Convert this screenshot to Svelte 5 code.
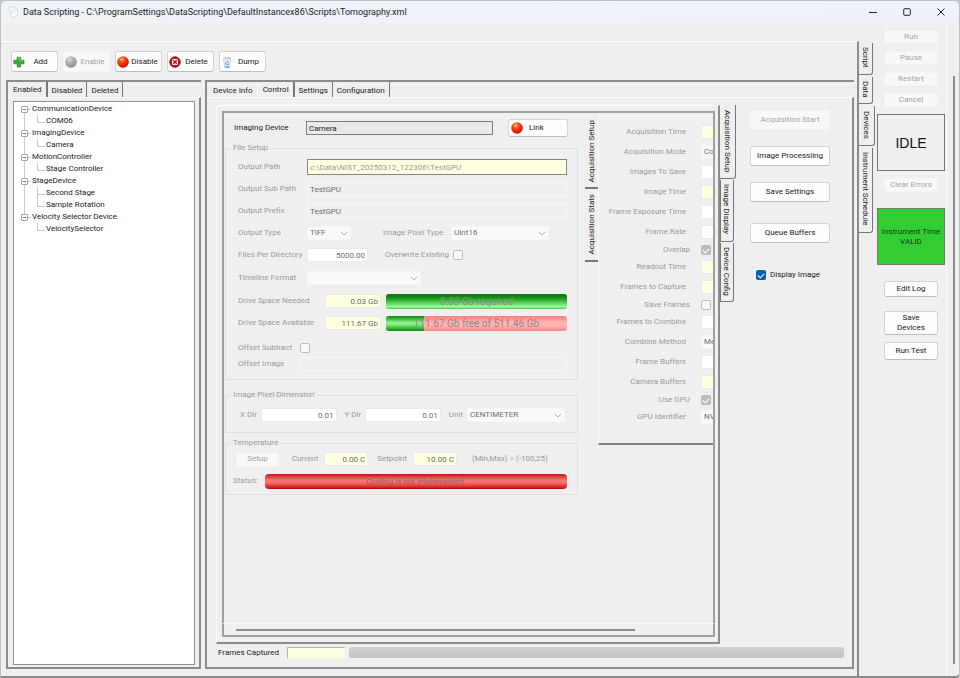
<script lang="ts">
  const tree = [
    { name: "CommunicationDevice", items: ["COM06"] },
    { name: "ImagingDevice", items: ["Camera"] },
    { name: "MotionController", items: ["Stage Controller"] },
    { name: "StageDevice", items: ["Second Stage", "Sample Rotation"] },
    { name: "Velocity Selector Device", items: ["VelocitySelector"] },
  ];

  const acquisition = [
    { label: "Acquisition Time", kind: "info" },
    { label: "Acquisition Mode", kind: "list", value: "Continuous" },
    { label: "Images To Save", kind: "text" },
    { label: "Image Time", kind: "info" },
    { label: "Frame Exposure Time", kind: "text" },
    { label: "Frame Rate", kind: "text" },
    { label: "Overlap", kind: "check", checked: true },
    { label: "Readout Time", kind: "info" },
    { label: "Frames to Capture", kind: "info" },
    { label: "Save Frames", kind: "check", checked: false },
    { label: "Frames to Combine", kind: "text" },
    { label: "Combine Method", kind: "list", value: "Mean" },
    { label: "Frame Buffers", kind: "text" },
    { label: "Camera Buffers", kind: "info" },
    { label: "Use GPU", kind: "check", checked: true },
    { label: "GPU Identifier", kind: "list", value: "NVIDIA" },
  ];

  const needed = { used: 100, text: "0.03 Gb required" };
  const available = { used: 21, text: "111.67 Gb free of 511.46 Gb" };

  let deviceTab = $state("Enabled");
  let pageTab = $state("Control");
  let sideTab = $state("Devices");
  let cameraTab = $state("Acquisition Setup");
  let setupTab = $state("Acquisition Setup");
  let displayImage = $state(true);
</script>

{#snippet ball(on)}
  <svg class="icon" viewBox="0 0 12 12" aria-hidden="true">
    <defs>
      <radialGradient id={on ? "ball-on" : "ball-off"} cx="40%" cy="28%" r="70%">
        <stop offset="0" stop-color={on ? "#ffc9a0" : "#dedede"} />
        <stop offset="0.35" stop-color={on ? "#ff4a18" : "#b8b8b8"} />
        <stop offset="1" stop-color={on ? "#c91000" : "#8e8e8e"} />
      </radialGradient>
    </defs>
    <circle cx="6" cy="6" r="5.8" fill="url(#{on ? 'ball-on' : 'ball-off'})" />
  </svg>
{/snippet}

{#snippet dropdown(id, value, cls)}
  <span class="dropdown {cls}">
    <select {id} disabled aria-label={id}>
      <option>{value}</option>
    </select>
    <svg viewBox="0 0 8 5" aria-hidden="true">
      <path d="M1 1l3 3 3-3" fill="none" stroke="#b4b4b4" />
    </svg>
  </span>
{/snippet}

{#snippet tabs(names, current, pick, cls)}
  <div class="tabs {cls}" role="tablist">
    {#each names as name}
      <button
        role="tab"
        class:selected={name === current}
        aria-selected={name === current}
        onclick={() => pick(name)}><span>{name}</span></button
      >
    {/each}
  </div>
{/snippet}

<div class="window">
  <header>
    <svg class="app-icon" viewBox="0 0 10 12" aria-hidden="true">
      <path d="M1 1.5l6-1 2.5 2.5v6.500l-6 2z" fill="#fbfbfb" stroke="#d2d2d2" stroke-width=".7" />
      <path d="M7 .5l.3 3 2.200-.500M3 5l4-.8M3.200 7l4-.8" fill="none" stroke="#d2d2d2" stroke-width=".7" />
    </svg>
    <h1>Data Scripting - C:\ProgramSettings\DataScripting\DefaultInstancex86\Scripts\Tomography.xml</h1>
    <div class="controls">
      <button aria-label="Minimize">
        <svg viewBox="0 0 8 8"><path d="M0 4.500h8" /></svg>
      </button>
      <button aria-label="Maximize">
        <svg viewBox="0 0 8 8"><rect x=".7" y=".7" width="6.600" height="6.600" rx="1" /></svg>
      </button>
      <button aria-label="Close">
        <svg viewBox="0 0 8 8"><path d="M.5.5l7 7M7.500.5l-7 7" /></svg>
      </button>
    </div>
  </header>

  <div class="body">
    <main>
      <div class="toolbar">
        <button>
          <svg class="icon" viewBox="0 0 12 12" aria-hidden="true">
            <path d="M4.200 1.200h3.400V4.200H11v3.600H7.600V11H4.200V7.800H.8V4.200h3.400z" fill="#35a832" stroke="#1d7f1f" stroke-width=".6" stroke-linejoin="round" />
            <path d="M5 1.900h1.600v3h3.600" fill="none" stroke="#8fe07f" stroke-width=".8" />
          </svg>
          <span>Add</span>
        </button>
        <button disabled>{@render ball(false)}<span>Enable</span></button>
        <button>{@render ball(true)}<span>Disable</span></button>
        <button>
          <svg class="icon" viewBox="0 0 12 12" aria-hidden="true">
            <circle cx="6" cy="6" r="5.300" fill="#c8141c" stroke="#8c0b10" stroke-width=".8" />
            <rect x="3" y="3" width="6" height="6" rx="1.500" fill="#fff" />
            <path d="M4.200 4.200l3.600 3.600M7.800 4.200L4.200 7.800" stroke="#b01018" stroke-width="1.400" />
          </svg>
          <span>Delete</span>
        </button>
        <button>
          <svg class="icon" viewBox="0 0 12 12" aria-hidden="true">
            <path d="M2.500 3h7L8.600 11.500H3.600z" fill="#eef3f7" stroke="#b3bdc6" stroke-width=".6" />
            <path d="M1.500 2.500l3-1.800 5.500.600-.5 1.700z" fill="#c5ccd2" />
            <path d="M6 4.800l1.400 1.700M7.500 7.600L6.400 9.400M4.700 8.600l.3-2" stroke="#3e8fd0" stroke-width="1.100" />
            <path d="M4 11h4.300" stroke="#777" />
          </svg>
          <span>Dump</span>
        </button>
      </div>

      <div class="panes">
        <section class="pane devices">
          {@render tabs(["Enabled", "Disabled", "Deleted"], deviceTab, (n) => (deviceTab = n), "")}
          <div class="page">
            <ul class="tree">
              {#each tree as node}
                <li>
                  <i class="toggle"></i>{node.name}
                  <ul>
                    {#each node.items as item}
                      <li>{item}</li>
                    {/each}
                  </ul>
                </li>
              {/each}
            </ul>
          </div>
        </section>

        <section class="pane detail">
          {@render tabs(["Device Info", "Control", "Settings", "Configuration"], pageTab, (n) => (pageTab = n), "")}
          <div class="page">
            <div class="camera">
              <div class="frame">
                <div class="view">
                  <div class="forms">
                    <div class="row device">
                      <label for="device">Imaging Device</label>
                      <input id="device" value="Camera" readonly />
                      <button class="link">{@render ball(true)}<span>Link</span></button>
                    </div>

                    <fieldset class="file">
                      <legend>File Setup</legend>
                      <div class="row">
                        <label for="path">Output Path</label>
                        <input id="path" class="grow path" value="c:\Data\NIST_20250312_122306\TestGPU" readonly />
                      </div>
                      <div class="row">
                        <label for="sub">Output Sub Path</label>
                        <input id="sub" class="grow flat" value="TestGPU" disabled />
                      </div>
                      <div class="row">
                        <label for="prefix">Output Prefix</label>
                        <input id="prefix" class="grow flat" value="TestGPU" disabled />
                      </div>
                      <div class="row">
                        <label for="type">Output Type</label>
                        {@render dropdown("type", "TIFF", "small")}
                        <label class="second shift" for="pixel">Image Pixel Type</label>
                        {@render dropdown("pixel", "UInt16", "wide")}
                      </div>
                      <div class="row">
                        <label for="files">Files Per Directory</label>
                        <input id="files" class="number" value="5000.00" disabled />
                        <label class="second" for="overwrite">Overwrite Existing</label>
                        <input id="overwrite" type="checkbox" disabled />
                      </div>
                      <div class="row tall">
                        <label for="timeline">Timeline Format</label>
                        {@render dropdown("timeline", "", "long")}
                      </div>
                      <div class="row drive">
                        <label for="need">Drive Space Needed</label>
                        <input id="need" class="info" value="0.03 Gb" disabled />
                        <div class="bar" role="progressbar" aria-label="Drive space needed" aria-valuenow={needed.used}>
                          <i class="top" style="width: {needed.used}%"></i>
                          <span>{needed.text}</span>
                        </div>
                      </div>
                      <div class="row drive">
                        <label for="avail">Drive Space Available</label>
                        <input id="avail" class="info" value="111.67 Gb" disabled />
                        <div class="bar" role="progressbar" aria-label="Drive space available" aria-valuenow={available.used}>
                          <i style="width: {available.used}%"></i>
                          <span>{available.text}</span>
                        </div>
                      </div>
                      <div class="row short offset first">
                        <label for="offset">Offset Subtract</label>
                        <input id="offset" type="checkbox" disabled />
                      </div>
                      <div class="row short offset">
                        <label for="image">Offset Image</label>
                        <input id="image" class="grow flat" disabled />
                      </div>
                    </fieldset>

                    <fieldset class="pixels">
                      <legend>Image Pixel Dimension'</legend>
                      <div class="row">
                        <label for="x">X Dir</label>
                        <input id="x" value="0.01" disabled />
                        <label for="y">Y Dir</label>
                        <input id="y" value="0.01" disabled />
                        <label for="unit">Unit</label>
                        {@render dropdown("unit", "CENTIMETER", "wide")}
                      </div>
                    </fieldset>

                    <fieldset class="temperature">
                      <legend>Temperature</legend>
                      <div class="row">
                        <button class="setup" disabled>Setup</button>
                        <label for="current">Current</label>
                        <input id="current" class="info" value="0.00 C" disabled />
                        <label for="setpoint">Setpoint</label>
                        <input id="setpoint" class="info" value="10.00 C" disabled />
                        <span class="range">(Min,Max) = (-100,25)</span>
                      </div>
                      <div class="row status">
                        <span>Status:</span>
                        <div class="bar error"><span>Cooling is not implemented.</span></div>
                      </div>
                    </fieldset>
                  </div>

                  {@render tabs(["Acquisition Setup", "Acquisition Stats"], setupTab, (n) => (setupTab = n), "side left")}

                  <div class="acquisition">
                    {#each acquisition as field, i}
                      <div class="field {field.kind}">
                        <label for="acq{i}">{field.label}</label>
                        {#if field.kind === "check"}
                          <input id="acq{i}" type="checkbox" checked={field.checked} disabled />
                        {:else if field.kind === "list"}
                          {@render dropdown(`acq${i}`, field.value, "wide")}
                        {:else}
                          <input id="acq{i}" class={field.kind} disabled />
                        {/if}
                      </div>
                    {/each}
                  </div>
                </div>
                <div class="scroll"><i></i></div>
              </div>

              {@render tabs(["Acquisition Setup", "Image Display", "Device Config"], cameraTab, (n) => (cameraTab = n), "side inner")}

              <div class="actions">
                <button disabled>Acquisition Start</button>
                <button>Image Processiing</button>
                <button>Save Settings</button>
                <button class="queue">Queue Buffers</button>
                <label><input type="checkbox" bind:checked={displayImage} />Display Image</label>
              </div>
            </div>

            <div class="frames">
              <label for="captured">Frames Captured</label>
              <input id="captured" class="info" readonly />
              <div class="meter" role="progressbar" aria-label="Frames captured" aria-valuenow="0"></div>
            </div>
          </div>
        </section>
      </div>
    </main>

    {@render tabs(["Script", "Data", "Devices", "Instrument Schedule"], sideTab, (n) => (sideTab = n), "side outer")}

    <aside>
      <button disabled>Run</button>
      <button disabled>Pause</button>
      <button disabled>Restart</button>
      <button disabled>Cancel</button>
      <output class="idle">IDLE</output>
      <button disabled>Clear Errors</button>
      <output class="valid">Instrument Time<br />VALID</output>
      <button class="log">Edit Log</button>
      <button class="save">Save<br />Devices</button>
      <button class="test">Run Test</button>
    </aside>
    <div class="rail"></div>
  </div>
</div>

<style>
  :global(body) {
    background: #c4c8cc;
  }
  .window,
  .window * {
    box-sizing: border-box;
  }
  .window {
    display: flex;
    flex-direction: column;
    min-height: 100vh;
    border: 1px solid #bdbfc2;
    border-bottom: 2px solid #8a8a8a;
    border-radius: 6px 6px 5px 0;
    overflow: hidden;
    background: #efefef;
    color: #1a1a1a;
    font-family: Roboto, "Liberation Sans", Arial, sans-serif;
    font-size: 8px;
    line-height: 10px;
    white-space: nowrap;
  }
  button,
  input,
  select {
    font: inherit;
    color: inherit;
    margin: 0;
    padding: 0;
    min-width: 0;
  }
  button {
    border: 1px solid #d4d4d4;
    border-bottom-color: #bdbdbd;
    border-radius: 3px;
    background: #fdfdfd;
  }
  button:disabled {
    border-color: #f3f3f3;
    background: #f8f8f8;
    color: #a3a3a3;
  }
  ul {
    list-style: none;
    margin: 0;
    padding: 0;
  }
  .icon {
    width: 12px;
    height: 12px;
    flex: none;
  }

  header {
    display: flex;
    align-items: center;
    height: 22px;
    padding-left: 7px;
    background: linear-gradient(90deg, #edf3f8, #edf2fb 40%, #edf2fa);
  }
  .app-icon {
    width: 10px;
    height: 12px;
  }
  h1 {
    flex: 1;
    margin: 0 0 0 5px;
    color: #1c1c1c;
    font-size: 9px;
    font-weight: 400;
    line-height: 12px;
  }
  .controls {
    display: flex;
    padding-right: 1px;
  }
  .controls button {
    display: grid;
    place-items: center;
    width: 34px;
    height: 22px;
    border: 0;
    background: none;
  }
  .controls svg {
    width: 8px;
    height: 8px;
    fill: none;
    stroke: #222;
  }

  .body {
    flex: 1;
    display: flex;
  }
  main {
    flex: 1;
    min-width: 0;
    display: flex;
    flex-direction: column;
    margin-top: 18px;
    border-top: 1px solid #fcfcfc;
    border-right: 2px solid #8c8c8c;
    padding: 9px 3px 7px 5px;
  }
  .toolbar {
    display: flex;
    gap: 5px;
    padding: 0 5px 8px;
  }
  .toolbar button {
    display: flex;
    align-items: center;
    width: 47px;
    height: 21px;
    padding: 0 1px;
  }
  .toolbar span {
    flex: 1;
    text-align: center;
  }

  .panes {
    flex: 1;
    display: flex;
    gap: 4px;
  }
  .pane {
    display: flex;
    flex-direction: column;
    border-top: 2px solid #8c8c8c;
    border-left: 2px solid #8c8c8c;
  }
  .devices {
    flex: 0 0 195px;
  }
  .detail {
    flex: 1;
    min-width: 0;
  }
  .page {
    flex: 1;
    display: flex;
    flex-direction: column;
    border-top: 1px solid #fbfbfb;
    border-right: 2px solid #8c8c8c;
    border-bottom: 2px solid #8c8c8c;
  }

  .tabs {
    display: flex;
    height: 15px;
  }
  .tabs button {
    border: 0;
    border-right: 1px solid #777;
    border-radius: 0;
    background: none;
    padding: 3px 4px 0;
  }
  .tabs button.selected {
    padding: 1px 4px 0 5px;
    border-right-width: 2px;
  }
  .detail > .tabs {
    padding-left: 2px;
  }
  .detail > .tabs button:first-child {
    border-right-color: #f8f8f8;
  }

  .tree {
    flex: 1;
    margin: 3px 4px 2px 5px;
    padding: 1px 6px;
    border: 1px solid #8a919c;
    background: #fff;
  }
  .tree li {
    position: relative;
    line-height: 12px;
    padding-left: 12px;
  }
  .tree li li {
    padding-left: 14px;
  }
  .tree > li::before {
    content: "";
    position: absolute;
    left: 4px;
    top: 6px;
    bottom: -6px;
    border-left: 1px solid #c9c9c9;
  }
  .tree > li:last-child::before {
    display: none;
  }
  .toggle {
    position: absolute;
    left: 1px;
    top: 3px;
    width: 7px;
    height: 7px;
    border: 1px solid #a2a2a2;
    border-radius: 1px;
    background: linear-gradient(#5a7fc0, #5a7fc0) center / 3px 1px no-repeat #fff;
  }
  .toggle::after {
    content: "";
    position: absolute;
    left: 6px;
    top: 2px;
    width: 3px;
    border-top: 1px solid #c9c9c9;
  }
  .tree li li::before {
    content: "";
    position: absolute;
    left: 5px;
    top: 0;
    width: 7px;
    height: 7px;
    border-left: 1px solid #c9c9c9;
    border-bottom: 1px solid #c9c9c9;
  }
  .tree li li:not(:last-child)::after {
    content: "";
    position: absolute;
    left: 5px;
    top: 0;
    height: 12px;
    border-left: 1px solid #c9c9c9;
  }

  .camera {
    flex: 1;
    display: flex;
    padding: 7px 0 0 9px;
  }
  .frame {
    flex: 1;
    min-width: 0;
    display: flex;
    flex-direction: column;
    padding: 5px 3px 5px 5px;
    border: 1px solid #f9f9f9;
    border-right: 2px solid #8c8c8c;
    border-bottom: 2px solid #8c8c8c;
  }
  .view {
    flex: 1;
    display: flex;
    align-items: flex-start;
    border: 2px solid #a0a0a0;
    border-bottom: 0;
    padding-left: 1px;
    overflow: hidden;
  }
  .scroll {
    height: 14px;
    padding: 5px 78px 0 12px;
    border: 2px solid #a0a0a0;
    border-top: 1px solid #fafafa;
  }
  .scroll i {
    display: block;
    height: 2px;
    background: #8c8c8c;
  }

  .forms {
    flex: 0 0 353px;
    min-width: 0;
    color: #9a9a9a;
  }
  .row {
    display: flex;
    align-items: center;
    height: 22px;
  }
  .row label {
    flex: none;
  }
  .row input,
  .field input,
  .dropdown select {
    height: 14px;
    border: 1px solid #ebebeb;
    background: #fff;
    color: #6d6d6d;
    padding: 0 2px;
    border-radius: 0;
  }
  .row input.grow {
    flex: 1;
  }
  .row.device {
    color: #1a1a1a;
    margin: 4px 0;
    padding: 0 10px 0 9px;
  }
  .device label {
    width: 72px;
  }
  .row.device input {
    flex: 1;
    border-color: #7d7d7d;
    background: #e9e9e9;
    color: #1a1a1a;
  }
  .link {
    display: flex;
    align-items: center;
    width: 60px;
    height: 18px;
    margin-left: 15px;
    padding-left: 2px;
  }
  .link span {
    margin-left: 6px;
  }

  fieldset {
    min-width: 0;
    margin: 0;
    padding: 0 10px 0 12px;
    border: 1px solid #e0e0e0;
  }
  legend {
    margin-left: -7px;
    padding: 0 2px;
    height: 10px;
  }
  .file {
    padding-top: 3px;
    padding-bottom: 7px;
  }
  .file label {
    width: 69px;
  }
  .file .second {
    width: 68px;
    margin-left: 17px;
  }
  .file .second.shift {
    margin-left: 32px;
  }
  .row.tall {
    height: 24px;
  }
  .row.short {
    height: 16px;
  }
  .row.first {
    margin-top: 6px;
  }
  .file .offset label {
    width: 62px;
  }
  .file .drive label {
    width: 87px;
  }
  .row input.path {
    height: 16px;
    border-color: #858585;
    background: #ffffe1;
    color: #999;
  }
  .row input.flat {
    background: none;
    border-color: #f6f6f6;
  }
  .row input.number {
    width: 61px;
    text-align: right;
  }
  .drive .info {
    width: 56px;
    margin-right: 5px;
  }
  .row input.info,
  .field input.info {
    background: #ffffe1;
    text-align: right;
  }
  .dropdown {
    position: relative;
    flex: none;
  }
  .dropdown select {
    display: block;
    appearance: none;
    width: 100%;
    border-color: #f5f5f5;
    background: #f9f9f9;
    opacity: 1;
  }
  .dropdown svg {
    position: absolute;
    right: 3px;
    top: 5px;
    width: 8px;
    height: 5px;
  }
  .small {
    width: 44px;
  }
  .wide {
    width: 98px;
  }
  .long {
    width: 114px;
  }

  .window input[type="checkbox"] {
    appearance: none;
    flex: none;
    width: 10px;
    height: 10px;
    padding: 0;
    border: 1px solid #bcbcbc;
    border-radius: 2px;
    background: #f8f8f8;
  }
  .window input[type="checkbox"]:checked {
    border: 0;
    background: #bcbcbc;
  }
  input[type="checkbox"]:checked::after {
    content: "";
    display: block;
    width: 5px;
    height: 3px;
    margin: 3px 0 0 2px;
    border-left: 1px solid #fff;
    border-bottom: 1px solid #fff;
    transform: rotate(-45deg);
  }

  .bar {
    position: relative;
    flex: 1;
    height: 15px;
    border-radius: 3px;
    overflow: hidden;
    background: linear-gradient(#ff7c7c, #ffb4b4 45%, #ffb4b4 65%, #ff8484);
  }
  .bar i {
    position: absolute;
    inset: 0 auto 0 0;
    background: linear-gradient(#0a8a0a, #8ef58e 45%, #7ae87a 60%, #0a860a);
  }
  .bar i.top {
    background: linear-gradient(#067a06, #159015 25%, #7df07d 75%, #a0ffa0 85%, #4cc04c);
  }
  .bar span {
    position: relative;
    display: block;
    text-align: center;
    font-size: 10px;
    line-height: 16px;
    color: #8c8c8c;
  }
  .bar.error {
    background: linear-gradient(#c81010, #fa7474 40%, #f66a6a 60%, #bf0808);
    border-radius: 4px;
  }
  .bar.error span {
    font-size: 8px;
    color: #985c5c;
  }

  .pixels {
    margin-top: 10px;
    padding-top: 4px;
    padding-bottom: 6px;
  }
  .pixels .row {
    gap: 4px;
    padding: 0 2px;
  }
  .pixels .row input {
    flex: 1;
    margin-right: 4px;
    text-align: right;
  }
  .temperature {
    margin-top: 5px;
    padding-bottom: 2px;
  }
  .temperature .row {
    gap: 6px;
    margin-left: -2px;
  }
  .temperature .status {
    margin-left: -5px;
    gap: 7px;
  }
  .setup {
    width: 43px;
    height: 15px;
    margin-right: 7px;
  }
  .temperature .info {
    width: 44px;
    margin-right: 3px;
  }
  .range {
    margin-left: 6px;
  }

  .tabs.side {
    flex-direction: column;
    height: auto;
    flex: none;
  }
  .side button {
    writing-mode: vertical-rl;
    width: 14px;
    padding: 4px 1px 6px;
    border: solid #777;
    border-width: 0 1px 1px 0;
    border-radius: 0 0 3px 0;
    line-height: 12px;
    text-align: left;
  }
  .inner {
    gap: 1px;
  }
  .inner button {
    border-left-width: 1px;
  }
  .side button.selected {
    width: 16px;
    padding: 5px 2px 6px;
    border-width: 0 1px 1px 0;
  }
  .left {
    padding-top: 2px;
    margin-left: 7px;
  }
  .left button,
  .left button.selected {
    border-width: 0 0 2px;
    border-radius: 0;
    align-self: flex-end;
    width: 13px;
    padding: 5px 0;
  }
  .left span {
    display: block;
    transform: rotate(180deg);
  }
  .outer {
    margin-top: 20px;
    gap: 2px;
  }

  .acquisition {
    flex: 1;
    min-width: 0;
    overflow: hidden;
    margin-top: 2px;
    padding: 6px 0 16px;
    border: solid #f9f9f9;
    border-width: 1px 0 0 1px;
    border-bottom: 2px solid #808080;
    color: #9a9a9a;
  }
  .field {
    display: flex;
    align-items: center;
    gap: 15px;
    height: 20px;
  }
  .field label {
    flex: 0 0 87px;
    text-align: right;
  }
  .field > input:not([type="checkbox"]) {
    flex: none;
    width: 98px;
  }
  .field.check {
    height: 15px;
    gap: 11px;
  }
  .field.check label {
    flex-basis: 91px;
  }

  .actions {
    display: flex;
    flex: none;
    flex-direction: column;
    gap: 16px;
    padding: 5px 22px 0 14px;
  }
  .actions button {
    width: 80px;
    height: 20px;
  }
  .actions .queue {
    margin-top: 5px;
  }
  .actions label {
    display: flex;
    align-items: center;
    gap: 4px;
    margin: 11px 0 0 6px;
  }
  .window .actions input:checked {
    background: #0a5fb4;
  }

  .frames {
    display: flex;
    align-items: center;
    height: 23px;
    padding: 0 8px 6px 11px;
  }
  .frames label {
    width: 69px;
  }
  .frames input {
    width: 58px;
    height: 12px;
    border: 1px solid #f4f4f4;
    border-top-color: #b5b5b5;
    border-left-color: #b5b5b5;
    background: #ffffe1;
  }
  .meter {
    flex: 1;
    height: 11px;
    margin-left: 4px;
    border-radius: 2px;
    background: linear-gradient(#d2d2d2, #c2c2c2);
  }

  aside {
    display: flex;
    flex-direction: column;
    align-items: center;
    gap: 7px;
    padding: 7px 1px 0 2px;
    border-right: 1px solid #f9f9f9;
  }
  aside button {
    width: 54px;
    height: 14px;
  }
  output {
    display: grid;
    place-content: center;
    width: 68px;
    height: 57px;
    border: 1px solid #777;
    text-align: center;
  }
  .idle {
    font-family: "Liberation Sans", Arial, sans-serif;
    font-size: 14px;
    color: #111;
  }
  .valid {
    margin-top: 9px;
    background: #32cd32;
    color: #163a16;
  }
  .log {
    height: 16px;
    margin-top: 9px;
  }
  .save {
    height: 24px;
    margin-top: 7px;
  }
  .test {
    height: 18px;
  }
  .rail {
    width: 8px;
    margin: 53px 4px 12px 0;
    border-right: 2px solid #8c8c8c;
  }
</style>
